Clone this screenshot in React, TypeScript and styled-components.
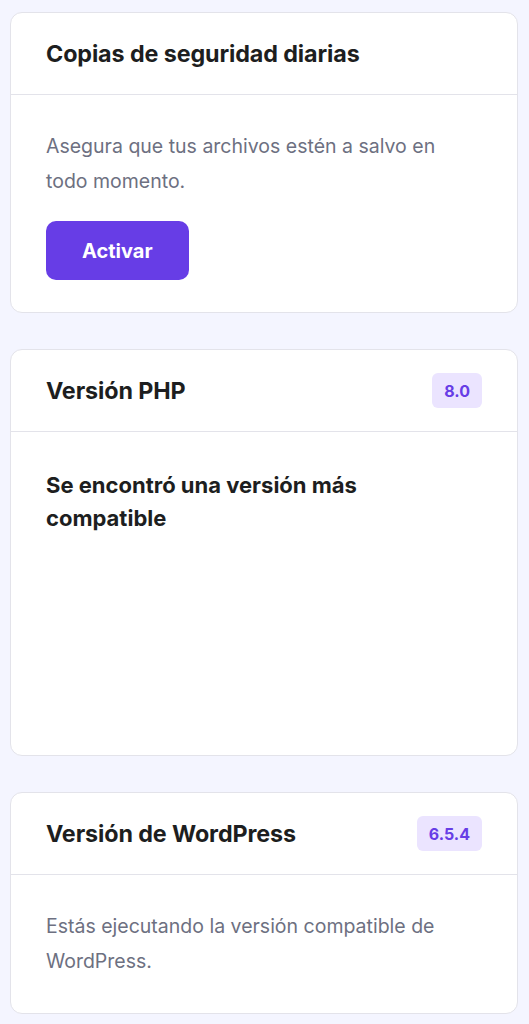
import React from "react";
import styled, { createGlobalStyle } from "styled-components";

const GlobalStyle = createGlobalStyle`
  * { box-sizing: border-box; }
  html, body {
    margin: 0;
    padding: 0;
    background: #f4f5ff;
    font-family: Inter, "Noto Sans", "DejaVu Sans", sans-serif;
    -webkit-font-smoothing: antialiased;
  }
`;

const Page = styled.main`
  display: flex;
  flex-direction: column;
  gap: 36px;
  padding: 12px 11px 10px 10px;
`;

const Card = styled.section`
  background: #ffffff;
  border: 1px solid #e3e3ea;
  border-radius: 12px;
  overflow: hidden;
`;

const CardHeader = styled.header`
  display: flex;
  align-items: center;
  justify-content: space-between;
  height: 82px;
  padding: 0 35px;
  border-bottom: 1px solid #e3e3ea;
`;

const CardTitle = styled.h2`
  margin: 0;
  font-size: 23.3px;
  font-weight: 700;
  color: #1d1e20;
  letter-spacing: -0.1px;
`;

const Badge = styled.span`
  display: inline-flex;
  align-items: center;
  justify-content: center;
  height: 35px;
  padding: 0 12px;
  border-radius: 6px;
  background: #ebe4ff;
  color: #673de6;
  font-size: 16px;
  font-weight: 700;
`;

const CardBody = styled.div<{ $minHeight?: number; $padBottom?: number }>`
  display: flex;
  flex-direction: column;
  align-items: flex-start;
  gap: 22px;
  padding: 34px 35px ${(p) => p.$padBottom ?? 32}px;
  min-height: ${(p) => (p.$minHeight ? `${p.$minHeight}px` : "auto")};
`;

const Text = styled.p`
  margin: 0;
  font-size: 19.5px;
  line-height: 35px;
  color: #6d7081;
  max-width: 420px;
`;

const Notice = styled.h3`
  margin: 3px 0 0;
  font-size: 22px;
  line-height: 33px;
  font-weight: 700;
  color: #1d1e20;
  max-width: 400px;
`;

const PrimaryButton = styled.button`
  height: 59px;
  padding: 0 36px;
  border: none;
  border-radius: 10px;
  background: #673de6;
  color: #ffffff;
  font-family: inherit;
  font-size: 20px;
  font-weight: 700;
  cursor: pointer;
`;

export default function App() {
  return (
    <>
      <GlobalStyle />
      <Page>
        <Card>
          <CardHeader>
            <CardTitle>Copias de seguridad diarias</CardTitle>
          </CardHeader>
          <CardBody>
            <Text>Asegura que tus archivos estén a salvo en todo momento.</Text>
            <PrimaryButton>Activar</PrimaryButton>
          </CardBody>
        </Card>

        <Card>
          <CardHeader>
            <CardTitle>Versión PHP</CardTitle>
            <Badge>8.0</Badge>
          </CardHeader>
          <CardBody $minHeight={323}>
            <Notice>Se encontró una versión más compatible</Notice>
          </CardBody>
        </Card>

        <Card>
          <CardHeader>
            <CardTitle>Versión de WordPress</CardTitle>
            <Badge>6.5.4</Badge>
          </CardHeader>
          <CardBody $padBottom={34}>
            <Text>Estás ejecutando la versión compatible de WordPress.</Text>
          </CardBody>
        </Card>
      </Page>
    </>
  );
}
